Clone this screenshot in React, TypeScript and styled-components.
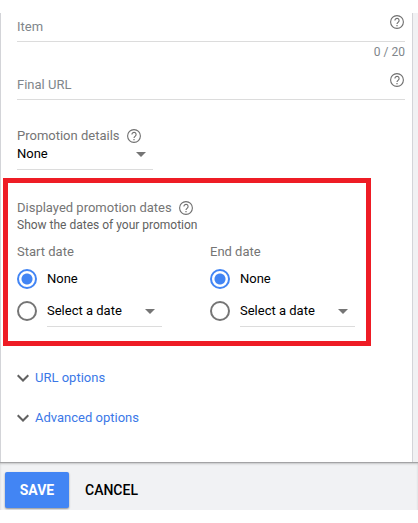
import React from "react";
import styled, { createGlobalStyle } from "styled-components";

const GlobalStyle = createGlobalStyle`
  *, *::before, *::after { box-sizing: border-box; }
  body {
    margin: 0;
    background: #fff;
    color: #000;
    font: 13px/16px Roboto, "Liberation Sans", sans-serif;
  }
  button, input, select { font: inherit; color: inherit; }
`;

const Page = styled.main`
  padding-top: 13px;
`;

const Surface = styled.div`
  background: #f1f1f3;
  padding-right: 5px;
`;

const Panel = styled.form`
  background: #fff;
  border: solid #d3d4d8;
  border-width: 0 1px;
  padding: 0 7px 34px 16px;
`;

const Field = styled.div`
  display: flex;
  align-items: flex-start;
  height: 29px;
  border-bottom: 1px solid #dcdcdc;
`;

const FieldInput = styled.input`
  flex: 1;
  min-width: 0;
  height: 26px;
  padding: 0;
  border: 0;
  outline: 0;
  background: transparent;
  &::placeholder { color: #80868b; opacity: 1; }
`;

const Counter = styled.div`
  margin-bottom: 9px;
  color: #80868b;
  font-size: 12px;
  line-height: 20px;
  text-align: right;
`;

const HelpButton = styled.button<{ $inField?: boolean }>`
  display: flex;
  flex: none;
  margin: ${(p) => (p.$inField ? "2px 1px 0 0" : "0")};
  padding: 0;
  border: 0;
  background: none;
  && { color: #6f6f6f; }
`;

const LabelRow = styled.div<{ $spaced?: boolean }>`
  display: flex;
  align-items: center;
  gap: 7px;
  margin-top: ${(p) => (p.$spaced ? "28px" : "0")};
  color: #757575;
`;

const SelectBox = styled.div`
  display: grid;
  grid-template-columns: 1fr 24px;
  flex: 1;
  border-bottom: 1px solid #dcdcdc;
  padding-bottom: 5px;
`;

const DetailsSelectBox = styled(SelectBox)`
  max-width: 136px;
`;

const Select = styled.select`
  grid-area: 1 / 1 / 2 / 3;
  appearance: none;
  width: 100%;
  height: 20px;
  padding: 0;
  border: 0;
  outline: 0;
  background: transparent;
`;

const Caret = styled.svg`
  grid-area: 1 / 2;
  place-self: center;
  pointer-events: none;
`;

const Highlight = styled.section`
  margin: 8px 34px 22px -14px;
  padding: 17px 11px 14px 9px;
  border: 5px solid #ee1c25;
`;

const Hint = styled.p`
  margin: 0 0 10px;
  color: #616161;
  font-size: 12px;
  line-height: 18px;
`;

const Dates = styled.div`
  display: grid;
  grid-template-columns: 1fr 1fr;
  gap: 48px;
`;

const DateGroup = styled.fieldset`
  min-width: 0;
  margin: 0;
  padding: 0;
  border: 0;
`;

const Legend = styled.legend`
  margin-bottom: 9px;
  padding: 0;
  color: #757575;
`;

const Choice = styled.div`
  display: flex;
  align-items: flex-start;
  gap: 10px;
  line-height: 20px;
  & + & { margin-top: 12px; }
`;

const Radio = styled.input`
  appearance: none;
  flex: none;
  width: 20px;
  height: 20px;
  margin: 0;
  border: 2px solid #757575;
  border-radius: 50%;
  &:checked {
    border-color: #4285f4;
    background: radial-gradient(circle, #4285f4 5px, transparent 6px);
  }
`;

const Expander = styled.button`
  display: flex;
  align-items: center;
  gap: 6px;
  height: 20px;
  padding: 0;
  border: 0;
  background: none;
  && { color: #3b78e7; }
  & + & { margin-top: 20px; }
`;

const Footer = styled.footer`
  display: flex;
  gap: 8px;
  padding: 10px 5px 2px;
  background: #f1f2f4;
  box-shadow: inset 0 1px 0 #a3a3a5, inset 0 2px 2px #c4c5c7;
`;

const Action = styled.button<{ $primary?: boolean }>`
  min-width: 64px;
  height: 36px;
  padding: 0 8px;
  border: 0;
  border-radius: 2px;
  background: ${(p) => (p.$primary ? "#4285f4" : "transparent")};
  box-shadow: ${(p) => (p.$primary ? "0 1px 2px rgba(0,0,0,.4)" : "none")};
  && {
    color: ${(p) => (p.$primary ? "#fff" : "#000")};
    font-size: 14px;
    font-weight: ${(p) => (p.$primary ? 700 : 500)};
  }
`;

function Help({ topic, inField }: { topic: string; inField?: boolean }) {
  return (
    <HelpButton type="button" $inField={inField} aria-label={`Help: ${topic}`}>
      <svg width="14" height="14" viewBox="0 0 14 14" fill="none" stroke="currentColor">
        <circle cx="7" cy="7" r="6.4" strokeWidth="1.1" />
        <path d="M4.9 5.5a2.1 2.1 0 1 1 3.4 1.6C7.5 7.8 7 8.1 7 9.1" strokeWidth="1.1" />
        <path d="M7 10v1.3" strokeWidth="1.2" />
      </svg>
    </HelpButton>
  );
}

function Arrow() {
  return (
    <Caret width="10" height="5" viewBox="0 0 10 5" aria-hidden="true">
      <path d="M0 0h10L5 5z" fill="#757575" />
    </Caret>
  );
}

function Chevron() {
  return (
    <svg width="12" height="8" viewBox="0 0 12 8" fill="none" aria-hidden="true">
      <path d="M.7 1.3L6 6.5l5.3-5.2" stroke="#616161" strokeWidth="2" />
    </svg>
  );
}

function DateChoice({ title, name }: { title: string; name: string }) {
  return (
    <DateGroup>
      <Legend>{title}</Legend>
      <Choice>
        <Radio type="radio" name={name} id={`${name}-none`} defaultChecked />
        <label htmlFor={`${name}-none`}>None</label>
      </Choice>
      <Choice>
        <Radio type="radio" name={name} aria-label={`${title}: select a date`} />
        <SelectBox>
          <Select aria-label={title}>
            <option>Select a date</option>
          </Select>
          <Arrow />
        </SelectBox>
      </Choice>
    </DateGroup>
  );
}

export default function App() {
  return (
    <>
      <GlobalStyle />
      <Page>
        <Surface>
          <Panel id="promotion">
            <Field>
              <FieldInput placeholder="Item" aria-label="Item" maxLength={20} />
              <Help topic="Item" inField />
            </Field>
            <Counter>0 / 20</Counter>
            <Field>
              <FieldInput placeholder="Final URL" aria-label="Final URL" />
              <Help topic="Final URL" inField />
            </Field>
            <LabelRow $spaced>
              <label htmlFor="details">Promotion details</label>
              <Help topic="Promotion details" />
            </LabelRow>
            <DetailsSelectBox>
              <Select id="details">
                <option>None</option>
              </Select>
              <Arrow />
            </DetailsSelectBox>
            <Highlight>
              <LabelRow>
                <span>Displayed promotion dates</span>
                <Help topic="Displayed promotion dates" />
              </LabelRow>
              <Hint>Show the dates of your promotion</Hint>
              <Dates>
                <DateChoice title="Start date" name="start" />
                <DateChoice title="End date" name="end" />
              </Dates>
            </Highlight>
            <Expander type="button" aria-expanded={false}>
              <Chevron />
              URL options
            </Expander>
            <Expander type="button" aria-expanded={false}>
              <Chevron />
              Advanced options
            </Expander>
          </Panel>
        </Surface>
        <Footer>
          <Action type="submit" form="promotion" $primary>SAVE</Action>
          <Action type="button">CANCEL</Action>
        </Footer>
      </Page>
    </>
  );
}
